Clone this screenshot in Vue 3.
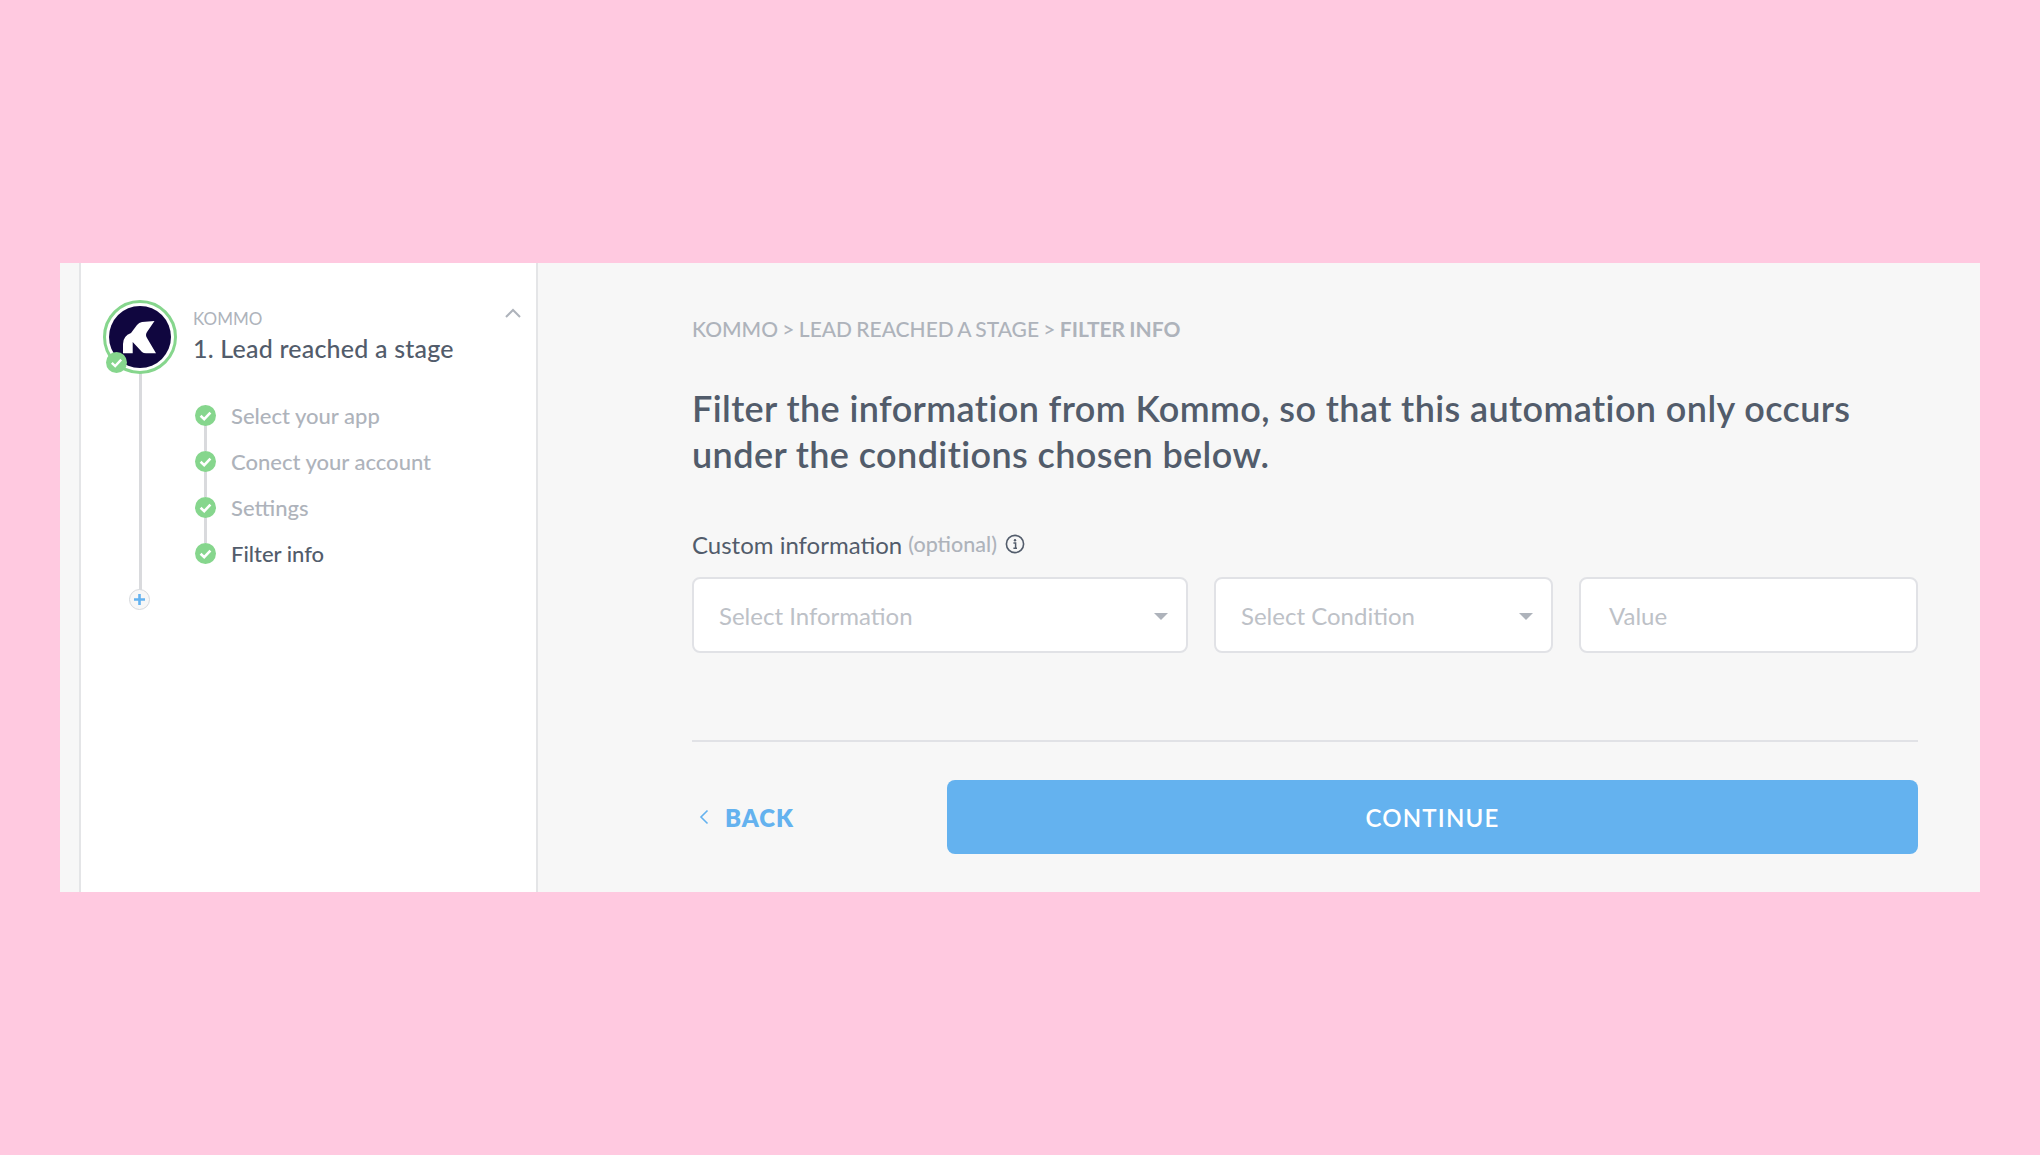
<template>
  <div class="page">
    <div class="panel">
      <div class="strip"></div>
      <aside class="sidebar">
        <div class="trigger">
          <div class="avatar">
            <svg viewBox="0 0 74 74" width="74" height="74">
              <circle cx="37" cy="37" r="35.5" fill="#fff" stroke="#86d68d" stroke-width="3" />
              <circle cx="37" cy="37" r="31" fill="#10063f" />
              <path
                fill="#fff"
                d="M51.5 21 L39 22 Q36 22.5 34 25 L28 33 Q20 36 20 44 V53.3 H29.7 V42 L39 52 Q40.5 53.3 43 53.3 H53 L44 38 Q42 35 44 32 Z"
              />
            </svg>
            <span class="avatar-check">
              <svg viewBox="0 0 21 21" width="21" height="21">
                <circle cx="10.5" cy="10.5" r="10.5" fill="#86d68d" />
                <path d="M5.8 10.8 L9.2 14 L15.2 7.6" fill="none" stroke="#fff" stroke-width="2.4" />
              </svg>
            </span>
          </div>
          <div class="trigger-text">
            <div class="app-name">KOMMO</div>
            <div class="trigger-title">1. Lead reached a stage</div>
          </div>
          <svg class="collapse" viewBox="0 0 16 10" width="16" height="10">
            <path d="M1 9 L8 2 L15 9" fill="none" stroke="#aeb3bb" stroke-width="2" />
          </svg>
        </div>

        <ul class="steps">
          <li v-for="(step, i) in steps" :key="step" class="step" :class="{ active: i === steps.length - 1 }">
            <svg class="step-check" viewBox="0 0 21 21" width="21" height="21">
              <circle cx="10.5" cy="10.5" r="10.5" fill="#86d68d" />
              <path d="M5.6 10.8 L9.2 14.2 L15.4 7.6" fill="none" stroke="#fff" stroke-width="2.6" />
            </svg>
            <span>{{ step }}</span>
          </li>
        </ul>

        <div class="add">
          <svg viewBox="0 0 21 21" width="21" height="21">
            <circle cx="10.5" cy="10.5" r="10" fill="#f7f7f7" stroke="#d5d8dc" />
            <path d="M10.5 5 V16 M5 10.5 H16" stroke="#64b2ef" stroke-width="2.6" />
          </svg>
        </div>
      </aside>

      <main class="content">
        <div class="crumbs">KOMMO &gt; LEAD REACHED A STAGE &gt; <b>FILTER INFO</b></div>
        <h1>Filter the information from Kommo, so that this automation only occurs under the conditions chosen below.</h1>

        <div class="label">
          Custom information <span class="optional">(optional)</span>
          <svg viewBox="0 0 20 20" width="20" height="20">
            <circle cx="10" cy="10" r="8.6" fill="none" stroke="#525c6b" stroke-width="1.6" />
            <circle cx="10" cy="6.2" r="1.2" fill="#525c6b" />
            <path d="M8.4 9 H10.6 V14 M8.4 14.2 H12" fill="none" stroke="#525c6b" stroke-width="1.5" />
          </svg>
        </div>

        <div class="fields">
          <div class="field">
            <span>Select Information</span>
            <i class="caret"></i>
          </div>
          <div class="field">
            <span>Select Condition</span>
            <i class="caret"></i>
          </div>
          <div class="field value">
            <span>Value</span>
          </div>
        </div>

        <div class="actions">
          <a class="back">
            <svg viewBox="0 0 10 16" width="10" height="16">
              <path d="M8.5 1.5 L2 8 L8.5 14.5" fill="none" stroke="#64b2ef" stroke-width="1.6" />
            </svg>
            BACK
          </a>
          <button class="continue">CONTINUE</button>
        </div>
      </main>
    </div>
  </div>
</template>

<script setup>
const steps = ['Select your app', 'Conect your account', 'Settings', 'Filter info']
</script>

<style>
body {
  margin: 0;
  background: #ffc9e0;
}
</style>

<style scoped>
.page {
  height: 1155px;
  box-sizing: border-box;
  padding: 263px 60px 0;
  font-family: Lato, 'Open Sans', sans-serif;
  color: #525c6b;
}

.panel {
  display: flex;
  width: 1920px;
  height: 629px;
  background: #f7f7f7;
}

.strip {
  width: 19px;
}

.sidebar {
  position: relative;
  width: 459px;
  box-sizing: border-box;
  padding: 37px 0 0 22px;
  background: #fff;
  border-left: 2px solid #e4e5e7;
  border-right: 2px solid #e4e5e7;
}

/* long line from the avatar down to the plus */
.sidebar::before {
  content: '';
  position: absolute;
  left: 58px;
  top: 110px;
  width: 3px;
  height: 220px;
  background: #d9dadd;
}

.trigger {
  display: flex;
  height: 74px;
}

.avatar {
  position: relative;
  width: 74px;
  height: 74px;
}

.avatar-check {
  position: absolute;
  left: 3px;
  bottom: 1px;
  height: 21px;
}

.trigger-text {
  margin-left: 16px;
  padding-top: 9px;
}

.app-name {
  font-size: 17px;
  line-height: 20px;
  color: #aeb3bb;
}

.trigger-title {
  margin-top: 5px;
  font-size: 25px;
  line-height: 28px;
  font-weight: 500;
  letter-spacing: 0.2px;
}

.collapse {
  position: absolute;
  right: 15px;
  top: 45px;
}

.steps {
  list-style: none;
  margin: 18px 0 0;
  padding: 0 0 0 92px;
}

.step {
  position: relative;
  display: flex;
  align-items: center;
  gap: 15px;
  height: 46px;
  font-size: 22px;
  font-weight: 500;
  color: #aeb3bb;
}

.step.active {
  color: #525c6b;
}

.step:not(:last-child)::after {
  content: '';
  position: absolute;
  left: 9px;
  top: 33px;
  width: 3px;
  height: 26px;
  background: #d9dadd;
}

.step-check {
  position: relative;
  z-index: 1;
  flex: none;
}

.add {
  position: relative;
  width: 21px;
  height: 21px;
  margin: 13px 0 0 26px;
}

.content {
  flex: 1;
  box-sizing: border-box;
  padding: 54px 62px 0 154px;
}

.crumbs {
  font-size: 21px;
  line-height: 24px;
  font-weight: 500;
  word-spacing: -1px;
  color: #aeb3bb;
}

.crumbs b {
  font-weight: 700;
}

h1 {
  margin: 44px 0 0;
  font-size: 36px;
  line-height: 46px;
  font-weight: 600;
  letter-spacing: 0.4px;
}

.label {
  display: flex;
  align-items: center;
  gap: 6px;
  margin-top: 52px;
  height: 30px;
  font-size: 24px;
}

.optional {
  font-size: 21.5px;
  font-weight: 500;
  color: #aeb3bb;
}

.label svg {
  margin-left: 2px;
}

.fields {
  display: grid;
  grid-template-columns: 496px 339px 339px;
  gap: 26px;
  margin-top: 18px;
}

.field {
  position: relative;
  display: flex;
  align-items: center;
  height: 76px;
  box-sizing: border-box;
  padding: 0 25px;
  background: #fff;
  border: 2px solid #e1e2e6;
  border-radius: 8px;
  font-size: 24px;
  color: #bdc1c7;
}

.field.value {
  padding-left: 28px;
}

.caret {
  position: absolute;
  right: 18px;
  top: 34px;
  border-left: 7px solid transparent;
  border-right: 7px solid transparent;
  border-top: 7px solid #aeb3bb;
}

.actions {
  display: flex;
  align-items: center;
  justify-content: space-between;
  margin-top: 87px;
  padding-top: 38px;
  border-top: 2px solid #e1e2e6;
}

.back {
  display: flex;
  align-items: center;
  gap: 16px;
  padding-left: 7px;
  font-size: 24px;
  font-weight: 800;
  letter-spacing: 1px;
  color: #64b2ef;
}

.continue {
  width: 971px;
  height: 74px;
  border: 0;
  border-radius: 8px;
  background: #64b2ef;
  color: #fff;
  font: 600 24px Lato, 'Open Sans', sans-serif;
  letter-spacing: 1.2px;
}
</style>
